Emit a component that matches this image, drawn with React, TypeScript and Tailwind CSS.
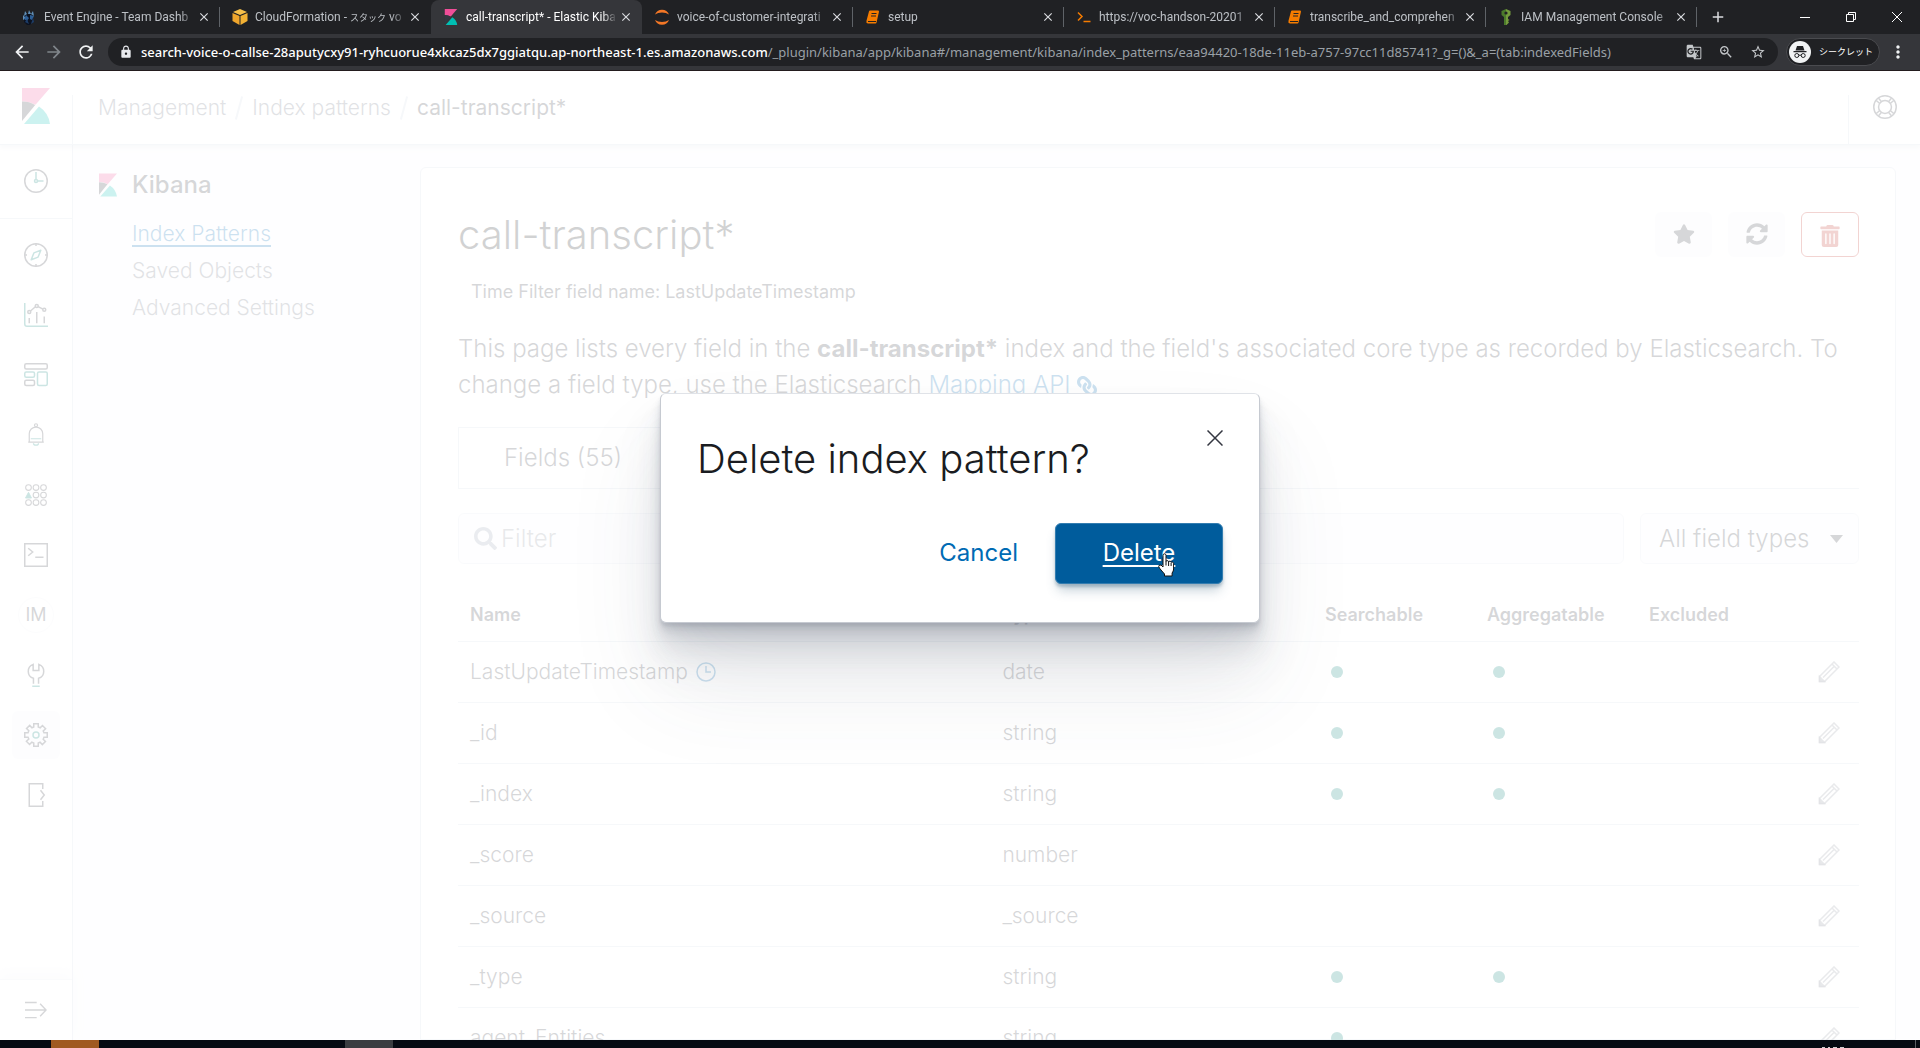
import type { ReactNode } from "react";
import {
  MdAdd,
  MdArrowBack,
  MdArrowForward,
  MdClose,
  MdGTranslate,
  MdLock,
  MdMoreVert,
  MdRefresh,
  MdStarBorder,
  MdZoomIn,
} from "react-icons/md";
import { FaLink, FaSearch, FaStar, FaSyncAlt, FaTrashAlt } from "react-icons/fa";

/* ---------- logos ---------- */

function KibanaLogo({ className }: { className: string }) {
  return (
    <svg viewBox="0 0 28 36" className={className} aria-hidden="true">
      <path d="M0 0h28L13.5 16.8A26 26 0 0 0 0 13.4z" fill="#F04E98" />
      <path d="M0 13.6V33l13.2-16A25 25 0 0 0 0 13.6z" fill="#343741" />
      <path d="M17 18.6 2 36h26a25 25 0 0 0-11-17.4z" fill="#00BFB3" />
    </svg>
  );
}

function EngineIcon() {
  return (
    <svg viewBox="0 0 16 16" className="size-4 shrink-0" aria-hidden="true">
      <path d="M8 4l4 3v5l-3 4H6l-3-3V7z" fill="#0c1220" />
      <path d="M4 2l2 3-3 2zM8 1l2 4H7zM12 2l1 5-3-2zM2 6l3 3-3 2z" fill="#5f8fb8" />
      <path d="M5 6l3 3-2 3-3-2zM9 6l4 1-2 4-2-1z" fill="#2d5f96" />
      <path d="M6 10l2 5-4-2zM12 9l1 4-3 2z" fill="#1d3d68" />
    </svg>
  );
}

function CloudFormationIcon() {
  return (
    <svg viewBox="0 0 16 16" className="size-4 shrink-0" aria-hidden="true">
      <path d="M8 0l7 3-7 3-7-3z" fill="#f7c04a" />
      <path d="M.5 4l7 3v9l-7-4z" fill="#eea52c" />
      <path d="M15.500 4l-7 3v9l7-4z" fill="#f2b134" />
    </svg>
  );
}

function JupyterIcon() {
  return (
    <svg viewBox="0 0 16 16" className="size-4 shrink-0" aria-hidden="true">
      <path d="M1 5.500A7.500 7.500 0 0 1 15 5.500 9.500 6 0 0 0 1 5.500z" fill="#F37726" />
      <path d="M1 11a7.500 7.500 0 0 0 14 0A9.500 6 0 0 1 1 11z" fill="#F37726" />
    </svg>
  );
}

function BookIcon() {
  return (
    <svg viewBox="0 0 16 16" className="size-4 shrink-0" aria-hidden="true">
      <path d="M5 2.500h8L10.500 13.500H3.200q-1.200 0-.8-1.200z" fill="#F57C00" stroke="#F57C00" strokeWidth="2" strokeLinejoin="round" />
      <path d="M6.500 4.500h5M6 7h5M3 12.500h8" stroke="#202124" strokeWidth="1" fill="none" />
    </svg>
  );
}

function PromptIcon() {
  return (
    <svg viewBox="0 0 16 16" className="size-4 shrink-0" aria-hidden="true">
      <path d="M2 3.500l4 4-4 4M7.500 12.500h7" stroke="#F57C00" strokeWidth="1.500" fill="none" />
    </svg>
  );
}

function KeyIcon() {
  return (
    <svg viewBox="0 0 16 16" className="size-4 shrink-0" aria-hidden="true">
      <path d="M8 0L3.500 2v4L6 8v8h2z" fill="#4b7a2b" />
      <path d="M8 0l4.500 2v4L10 8v2l1.500 1-1.500 1 1 1.500L8.500 16H8z" fill="#759c3e" />
      <circle cx="8" cy="4" r="1.600" fill="#202124" />
    </svg>
  );
}

/* ---------- browser chrome ---------- */

type Tab = { title: ReactNode; icon: ReactNode; active?: boolean; divider?: boolean };

const tabs: Tab[] = [
  { title: "Event Engine - Team Dashb", icon: <EngineIcon />, divider: true },
  {
    title: (
      <>
        CloudFormation - <span className="text-[9px]">スタック</span> vo
      </>
    ),
    icon: <CloudFormationIcon />,
  },
  { title: "call-transcript* - Elastic Kiba", icon: <KibanaLogo className="h-4 w-4 shrink-0" />, active: true },
  { title: "voice-of-customer-integrati", icon: <JupyterIcon />, divider: true },
  { title: "setup", icon: <BookIcon />, divider: true },
  { title: "https://voc-handson-20201", icon: <PromptIcon />, divider: true },
  { title: "transcribe_and_comprehen", icon: <BookIcon />, divider: true },
  { title: "IAM Management Console", icon: <KeyIcon />, divider: true },
];

function BrowserTab({ title, icon, active, divider }: Tab) {
  return (
    <div
      className={
        active
          ? "flex h-full w-[211px] items-center rounded-t-lg bg-[#35363a] pr-2 pl-3 text-white"
          : "flex h-full w-[211px] items-center pl-3 text-[#bdc1c6]"
      }
    >
      {icon}
      <span className="ml-[7px] w-[151px] overflow-hidden [mask-image:linear-gradient(to_right,black_90%,transparent)] whitespace-nowrap">
        {title}
      </span>
      <button type="button" aria-label="Close tab" className="ml-0.5 text-[#dadce0]">
        <MdClose className="size-[14px]" />
      </button>
      {divider && <span className="ml-auto h-5 w-px bg-[#5f6368]" />}
    </div>
  );
}

function BrowserChrome() {
  return (
    <div className="shrink-0 border-b border-[#231c1e] bg-[#202124] font-['Roboto','Noto_Sans_CJK_JP',sans-serif] text-xs">
      <div className="flex h-[34px] items-center pl-[9px]">
        {tabs.map((tab, i) => (
          <BrowserTab key={i} {...tab} />
        ))}
        <button type="button" aria-label="New tab" className="ml-3 text-[#dadce0]">
          <MdAdd className="size-[18px]" />
        </button>
        <div className="ml-auto flex h-7 items-center text-white">
          <button type="button" aria-label="Minimize" className="flex w-[46px] justify-center">
            <svg viewBox="0 0 10 10" className="size-[10px]">
              <path d="M0 5.500h10" stroke="currentColor" />
            </svg>
          </button>
          <button type="button" aria-label="Restore" className="flex w-[46px] justify-center">
            <svg viewBox="0 0 10 10" className="size-[10px]" fill="none" stroke="currentColor">
              <path d="M.5 2.500h7v7h-7zM2.500 2.500v-2h7v7h-2" />
            </svg>
          </button>
          <button type="button" aria-label="Close window" className="flex w-[46px] justify-center">
            <svg viewBox="0 0 10 10" className="size-[10px]" stroke="currentColor">
              <path d="M0 0l10 10M10 0L0 10" />
            </svg>
          </button>
        </div>
      </div>
      <div className="flex h-9 items-center bg-[#35363a] pl-3">
        <button type="button" aria-label="Back" className="text-[#f1f3f4]">
          <MdArrowBack className="size-5" />
        </button>
        <button type="button" aria-label="Forward" className="ml-3 text-[#80868b]">
          <MdArrowForward className="size-5" />
        </button>
        <button type="button" aria-label="Reload" className="ml-3 text-[#f1f3f4]">
          <MdRefresh className="size-5" />
        </button>
        <div className="ml-3 flex h-7 flex-1 items-center rounded-full bg-[#202124] pr-3 pl-[11px]">
          <MdLock className="size-[14px] shrink-0 text-[#e8eaed]" />
          <p className="ml-2 font-['Noto_Sans',sans-serif] text-[13px] leading-5 whitespace-nowrap text-[#9aa0a6]">
            <span className="font-medium text-white">
              search-voice-o-callse-28aputycxy91-ryhcuorue4xkcaz5dx7ggiatqu.ap-northeast-1.es.amazonaws.com
            </span>
            /_plugin/kibana/app/kibana#/management/kibana/index_patterns/eaa94420-18de-11eb-a757-97cc11d85741?_g=()&amp;_a=(tab:indexedFields)
          </p>
          <div className="ml-auto flex gap-4 text-[#c4c7ca]">
            <MdGTranslate className="size-4" />
            <MdZoomIn className="size-4" />
            <MdStarBorder className="size-4" />
          </div>
        </div>
        <div className="ml-2 flex h-7 w-[94px] items-center rounded-full border border-[#4a4b4f] bg-[#202124] pl-[2px] text-white">
          <svg viewBox="0 0 22 22" className="size-[22px] shrink-0" aria-hidden="true">
            <circle cx="11" cy="11" r="11" fill="#f1f3f4" />
            <path d="M8 5h6l1.500 4.500h-9zM4.500 10h13v1.200h-13z" fill="#202124" />
            <g fill="none" stroke="#202124">
              <circle cx="7.800" cy="14.500" r="2" />
              <circle cx="14.200" cy="14.500" r="2" />
              <path d="M9.800 14.200h2.400" />
            </g>
          </svg>
          <span className="ml-2 text-[9px] whitespace-nowrap">シークレット</span>
        </div>
        <button type="button" aria-label="Browser menu" className="mr-3 ml-2 text-[#f1f3f4]">
          <MdMoreVert className="size-5" />
        </button>
      </div>
    </div>
  );
}

/* ---------- line icons ---------- */

function Icon({ children, className = "size-6" }: { children: ReactNode; className?: string }) {
  return (
    <svg viewBox="0 0 16 16" className={className} fill="none" stroke="#343741" aria-hidden="true">
      {children}
    </svg>
  );
}

const TEAL = "#017D73";

const RecentIcon = () => (
  <Icon>
    <circle cx="8" cy="8" r="7.500" />
    <g stroke={TEAL}>
      <circle cx="8" cy="8" r="1" />
      <path d="M8 2v5M9 8h4" />
    </g>
  </Icon>
);

const railIcons: { label: string; icon: ReactNode; active?: boolean }[] = [
  {
    label: "Discover",
    icon: (
      <Icon>
        <circle cx="8" cy="8" r="7.500" />
        <path d="M8 0v2M8 14v2M0 8h2M14 8h2" />
        <path d="M11.200 4.800L9.400 9.400 4.800 11.200 6.600 6.600z" stroke={TEAL} strokeLinejoin="round" />
      </Icon>
    ),
  },
  {
    label: "Visualize",
    icon: (
      <Icon>
        <path d="M.5 0v14q0 1.500 1.500 1.500h14" stroke={TEAL} />
        <path d="M3.500 10v3.500M8.500 6v7.500M13.500 9v4.500M4.300 5.300l3.300-2.800M9.400 2.400l3.200 1.700" />
        <circle cx="3.500" cy="6" r="1" />
        <circle cx="8.500" cy="2" r="1" />
        <circle cx="13.500" cy="4.500" r="1" />
      </Icon>
    ),
  },
  {
    label: "Dashboard",
    icon: (
      <Icon>
        <rect x=".5" y=".5" width="15" height="3.500" rx="1" />
        <rect x=".5" y="11.500" width="6.500" height="3.500" rx="1" />
        <g stroke={TEAL}>
          <rect x=".5" y="6" width="6.500" height="3.500" rx="1" />
          <rect x="9" y="6" width="6.500" height="9" rx="1" />
        </g>
      </Icon>
    ),
  },
  {
    label: "Alerting",
    icon: (
      <Icon>
        <g strokeWidth=".8">
          <circle cx="8" cy="1.500" r="1" />
          <path d="M3.500 12.500V7.200a4.500 4.500 0 0 1 9 0v5.300M2.800 12.700h10.400" />
          <path d="M4.500 10.500h7M6.300 13.500a1.700 1.300 0 0 0 3.400 0" stroke={TEAL} />
        </g>
      </Icon>
    ),
  },
  {
    label: "Anomaly detection",
    icon: (
      <Icon>
        <g strokeWidth=".7">
          <circle cx="3" cy="3" r="1.900" />
          <circle cx="8" cy="3" r="1.900" />
          <circle cx="13" cy="3" r="1.900" />
          <circle cx="8" cy="8" r="1.900" />
          <circle cx="13" cy="8" r="1.900" />
          <circle cx="3" cy="13" r="1.900" />
          <circle cx="8" cy="13" r="1.900" />
          <circle cx="13" cy="13" r="1.900" />
        </g>
        <path d="M3 6.200l2 3.800H1z" fill={TEAL} stroke={TEAL} strokeWidth=".6" />
      </Icon>
    ),
  },
  {
    label: "Dev Tools",
    icon: (
      <Icon>
        <path d="M.5.5h15v15H.500zM2.800 3.500l3 2.500-3 2.500M7.500 9.500H13" />
      </Icon>
    ),
  },
  {
    label: "Index Management",
    icon: (
      <span className="flex size-9 items-center justify-center rounded-full border border-[#f0f2f6] text-lg text-[#343741]">
        IM
      </span>
    ),
  },
  {
    label: "Security",
    icon: (
      <Icon>
        <path d="M6.300 13.800V10.200A4.900 4.900 0 0 1 6.100.9V5h3.800V.9a4.900 4.900 0 0 1-.2 9.300v3.600" />
        <path d="M5.500 15.500h5" stroke={TEAL} />
      </Icon>
    ),
  },
  {
    label: "Management",
    active: true,
    icon: (
      <Icon>
        <path d="M6.500.5h3v2.200l1.300.5 1.500-1.500 2.100 2.100-1.600 1.500.5 1.200h2.200v3h-2.200l-.5 1.300 1.500 1.500-2.100 2.100-1.500-1.600-1.200.5v2.200h-3v-2.200l-1.300-.5-1.500 1.500-2.100-2.100 1.600-1.500-.5-1.200H.5v-3h2.200l.5-1.300-1.500-1.500 2.100-2.100 1.500 1.600 1.200-.5z" />
        <circle cx="8" cy="8" r="2" stroke={TEAL} />
      </Icon>
    ),
  },
  {
    label: "Logout",
    icon: (
      <Icon>
        <path d="M12.500 4V.5h-9v15h9V12M11 4.800L13.500 8 11 11.200" />
      </Icon>
    ),
  },
];

function PencilIcon() {
  return (
    <svg viewBox="0 0 22 22" className="size-[22px]" fill="none" stroke="#69707D" strokeWidth="1.500" aria-hidden="true">
      <path d="M1.500 15.500L16 1l5 5L6.500 20.500h-5zM14 3l5 5M5 16.500L16.500 5" opacity=".75" />
      <path d="M1.500 15.500v5h5z" fill="#69707D" opacity=".75" />
    </svg>
  );
}

/* ---------- page ---------- */

function Rail() {
  return (
    <nav className="flex w-[73px] shrink-0 flex-col border-r border-[#D3DAE6] bg-white">
      <a href="#recent" aria-label="Recently viewed" className="flex h-[74px] shrink-0 items-center justify-center border-b border-[#D3DAE6] pb-0.5">
        <RecentIcon />
      </a>
      <div className="flex flex-1 flex-col pt-[6px]">
        {railIcons.map(({ label, icon, active }) => (
          <a key={label} href={`#${label}`} aria-label={label} className="flex h-[60px] shrink-0 items-center justify-center">
            <span
              className={
                active
                  ? "flex size-12 items-center justify-center rounded-md bg-[#f5f7fa]"
                  : "flex size-12 items-center justify-center"
              }
            >
              {icon}
            </span>
          </a>
        ))}
      </div>
      <button
        type="button"
        aria-label="Expand navigation"
        className="flex h-[61px] shrink-0 items-center justify-center border-t border-[#e6eaf1] shadow-[0_-6px_12px_rgba(152,162,179,0.15)]"
      >
        <Icon className="size-[22px]">
          <path d="M0 2.500h8.500M0 8h15M0 13.500h8.500M11 3.500L15.300 8 11 12.500" />
        </Icon>
      </button>
    </nav>
  );
}

function Header() {
  return (
    <header className="z-10 flex h-[74px] shrink-0 border-b border-[#D3DAE6] bg-white text-[21px] font-[350] shadow-[0_3px_4px_rgba(152,162,179,0.25)]">
      <a href="#home" aria-label="Kibana home" className="flex w-[72px] items-center justify-center pb-1">
        <KibanaLogo className="h-9 w-7" />
      </a>
      <div className="mt-6 w-px bg-[#D3DAE6]" />
      <ol className="flex flex-1 items-center pl-[25px] text-[#69707D]">
        <li>
          <a href="#management">Management</a>
        </li>
        <li aria-hidden="true" className="mx-3 h-6 w-0.5 rotate-[15deg] bg-[#D3DAE6]" />
        <li>
          <a href="#patterns">Index patterns</a>
        </li>
        <li aria-hidden="true" className="mx-3 h-6 w-0.5 rotate-[15deg] bg-[#D3DAE6]" />
        <li className="font-normal text-[#343741]">call-transcript*</li>
      </ol>
      <div className="mt-6 w-px bg-[#D3DAE6]" />
      <button type="button" aria-label="Help" className="flex w-[71px] items-center justify-center pb-0.5">
        <Icon>
          <circle cx="8" cy="8" r="7.500" />
          <circle cx="8" cy="8" r="4.300" />
          <path d="M2.200 3.700l2.300 2M3.700 2.200l2 2.300M13.800 3.700l-2.300 2M12.300 2.200l-2 2.300M2.200 12.300l2.300-2M3.700 13.800l2-2.300M13.800 12.300l-2.300-2M12.300 13.800l-2-2.300" />
        </Icon>
      </button>
    </header>
  );
}

function SideMenu() {
  return (
    <aside className="w-[347px] shrink-0 pt-[22px] pl-[26px] text-[21px] font-[350]">
      <h2 className="flex h-9 items-center text-2xl font-medium text-[#343741]">
        <KibanaLogo className="mr-[15px] h-6 w-[18px]" />
        Kibana
      </h2>
      <ul className="mt-3 pl-[33px] leading-[37px] text-[#69707D]">
        <li>
          <a href="#index-patterns" className="text-[#006BB4] underline decoration-2 underline-offset-4">
            Index Patterns
          </a>
        </li>
        <li>
          <a href="#saved-objects">Saved Objects</a>
        </li>
        <li>
          <a href="#advanced-settings">Advanced Settings</a>
        </li>
      </ul>
    </aside>
  );
}

type Field = { name: string; type: string; time?: boolean; searchable?: boolean; aggregatable?: boolean };

const fields: Field[] = [
  { name: "LastUpdateTimestamp", type: "date", time: true, searchable: true, aggregatable: true },
  { name: "_id", type: "string", searchable: true, aggregatable: true },
  { name: "_index", type: "string", searchable: true, aggregatable: true },
  { name: "_score", type: "number" },
  { name: "_source", type: "_source" },
  { name: "_type", type: "string", searchable: true, aggregatable: true },
  { name: "agent_Entities", type: "string", searchable: true },
];

const Dot = () => <span className="ml-[6px] block size-3 rounded-full bg-[#017D73]" />;

function FieldTable() {
  return (
    <table className="mt-6 w-full table-fixed text-left text-[21px] font-[350]">
      <thead>
        <tr className="h-[53px] border-b border-[#D3DAE6] text-lg">
          <th className="w-[38%] px-3 pt-0.5 font-semibold">Name</th>
          <th className="px-3 pt-0.5 font-semibold">Type</th>
          <th className="w-[162px] px-3 pt-0.5 font-semibold">Searchable</th>
          <th className="w-[162px] px-3 pt-0.5 font-semibold">Aggregatable</th>
          <th className="w-[162px] px-3 pt-0.5 font-semibold">Excluded</th>
          <th className="w-[60px]" aria-label="Actions" />
        </tr>
      </thead>
      <tbody>
        {fields.map((f) => (
          <tr key={f.name} className="h-[61px] border-b border-[#D3DAE6]">
            <td className="px-3">
              <span className="flex items-center gap-2">
                {f.name}
                {f.time && (
                  <svg viewBox="0 0 20 20" className="size-5" fill="none" stroke="#006BB4" strokeWidth="1.500" aria-hidden="true">
                    <circle cx="10" cy="10" r="9" />
                    <path d="M10 4v6h5" />
                  </svg>
                )}
              </span>
            </td>
            <td className="px-3">{f.type}</td>
            <td className="px-3">{f.searchable && <Dot />}</td>
            <td className="px-3">{f.aggregatable && <Dot />}</td>
            <td className="px-3" />
            <td>
              <button type="button" aria-label={`Edit ${f.name}`} className="mx-auto block">
                <PencilIcon />
              </button>
            </td>
          </tr>
        ))}
      </tbody>
    </table>
  );
}

function IndexPatternPanel() {
  return (
    <section className="mt-[22px] mr-6 min-w-0 flex-1 rounded-t-md border border-[#D3DAE6] bg-white pt-9 pr-9 pl-[37px] text-[#343741]">
      <div className="flex h-[60px] items-center">
        <h1 className="flex-1 pt-0.5 text-[40px] font-light text-[#1a1c21]">call-transcript*</h1>
        <div className="flex gap-4 text-[22px]">
          <button type="button" aria-label="Set as default index" className="flex h-[45px] w-[57px] items-center justify-center rounded-md bg-[#f5f7fa]">
            <FaStar />
          </button>
          <button type="button" aria-label="Refresh field list" className="flex h-[45px] w-[57px] items-center justify-center rounded-md bg-[#f5f7fa]">
            <FaSyncAlt />
          </button>
          <button type="button" aria-label="Remove index pattern" className="flex h-[45px] w-[58px] items-center justify-center rounded-md border border-[#BD271E] pt-1 text-[#BD271E]">
            <FaTrashAlt />
          </button>
        </div>
      </div>
      <p className="mt-[14px] pl-[13px] text-lg leading-[27px]">Time Filter field name: LastUpdateTimestamp</p>
      <p className="mt-[26px] text-2xl leading-9 font-[350]">
        This page lists every field in the <strong className="font-bold">call-transcript*</strong> index and the field's
        associated core type as recorded by Elasticsearch. To change a field type, use the Elasticsearch{" "}
        <a href="#mapping-api" className="text-[#006BB4]">
          Mapping API <FaLink className="inline size-5 -scale-x-100" />
        </a>
      </p>
      <div role="tablist" className="mt-6 flex border-b border-[#D3DAE6]">
        <button type="button" role="tab" aria-selected="true" className="h-[61px] border-t border-l border-[#D3DAE6] px-[45px] text-2xl font-[350]">
          Fields (55)
        </button>
      </div>
      <div className="mt-6 flex gap-4 text-2xl font-[350]">
        <label className="flex h-[51px] flex-1 items-center rounded-md border border-[#e3e8f0] bg-[#fbfcfd] pl-[15px]">
          <FaSearch className="size-[23px] text-[#98A2B3]" />
          <input type="text" placeholder="Filter" aria-label="Filter fields" className="ml-1 flex-1 bg-transparent outline-none placeholder:text-[#8a909b]" />
        </label>
        <div className="relative h-[51px] w-[219px]">
          <select aria-label="Field type" className="h-full w-full appearance-none rounded-md border border-[#e3e8f0] bg-[#fbfcfd] pl-[18px]">
            <option>All field types</option>
          </select>
          <svg viewBox="0 0 13 8" className="pointer-events-none absolute top-[22px] right-4 h-2 w-[13px]" aria-hidden="true">
            <path d="M0 0h13L6.500 8z" fill="#343741" />
          </svg>
        </div>
      </div>
      <FieldTable />
    </section>
  );
}

function ConfirmModal() {
  return (
    <div className="absolute inset-0 z-20 flex items-center justify-center bg-white/80 pb-24">
      <div
        role="dialog"
        aria-labelledby="modal-title"
        className="relative w-[600px] rounded-md border border-[#c6cad1] border-t-[#e0e3e8] bg-white px-9 pt-[35px] pb-[38px] text-2xl shadow-[0_60px_96px_rgba(65,78,101,0.1),0_36px_48px_rgba(65,78,101,0.1),0_24px_24px_rgba(65,78,101,0.1),0_12px_12px_rgba(65,78,101,0.1),0_6px_6px_rgba(65,78,101,0.1),0_3px_3px_rgba(65,78,101,0.1)]"
      >
        <h2 id="modal-title" className="text-[40px] leading-[60px] font-light text-[#1a1c21]">
          Delete index pattern?
        </h2>
        <button type="button" aria-label="Close dialog" className="absolute top-9 right-9">
          <svg viewBox="0 0 16 16" className="size-4" stroke="#343741" strokeWidth="1.500" aria-hidden="true">
            <path d="M.5.5l15 15M15.500.5l-15 15" />
          </svg>
        </button>
        <div className="mt-[34px] flex items-center justify-end">
          <button type="button" className="px-[37px] text-[#006BB4]">
            Cancel
          </button>
          <button
            type="button"
            className="relative h-[61px] w-[168px] rounded-md border border-[#337db0] bg-[#005C9C] text-white underline decoration-2 underline-offset-4 shadow-[0_3px_3px_rgba(54,97,126,0.3),0_9px_12px_-3px_rgba(54,97,126,0.3)]"
          >
            Delete
            <svg viewBox="0 0 17 24" className="absolute top-[29px] left-[102px] h-6 w-[17px]" aria-hidden="true">
              <path
                d="M5 2.500q0-1.700 1.500-1.700T8 2.500v6q0-.9 1.200-.9t1.400 1.200q.2-.6 1.200-.6t1.300 1.200q.3-.5 1.200-.4t1.300 1.300V16q0 2-1.500 4v3H6.500v-2L3 17q-1.800-2-2.300-3.500T3 12l2 2z"
                fill="#fff"
                stroke="#111"
              />
              <path d="M8 8.500v4M10.600 9v4M13.100 10v3" stroke="#111" />
            </svg>
          </button>
        </div>
      </div>
    </div>
  );
}

function Taskbar() {
  return (
    <div className="flex h-2 shrink-0 bg-[#060a12]">
      <div className="ml-[51px] w-12 bg-[#a05a21]" />
      <div className="ml-[246px] w-12 bg-[#3b3d41]" />
      <div className="ml-auto flex items-end gap-[3px]">
        <span className="h-px w-[3px] bg-white/80" />
        <span className="h-px w-[2px] bg-white/80" />
        <span className="h-px w-1 bg-white/80" />
        <span className="h-px w-1 bg-white/80" />
      </div>
      <div className="mr-1 ml-[71px] w-px bg-[#5b5e64]" />
    </div>
  );
}

export default function App() {
  return (
    <div className="flex h-screen flex-col overflow-hidden">
      <BrowserChrome />
      <div className="relative flex min-h-0 flex-1 flex-col overflow-hidden bg-[#FAFBFD] font-['Inter',sans-serif]">
        <Header />
        <div className="flex min-h-0 flex-1">
          <Rail />
          <SideMenu />
          <IndexPatternPanel />
        </div>
        <ConfirmModal />
      </div>
      <Taskbar />
    </div>
  );
}
